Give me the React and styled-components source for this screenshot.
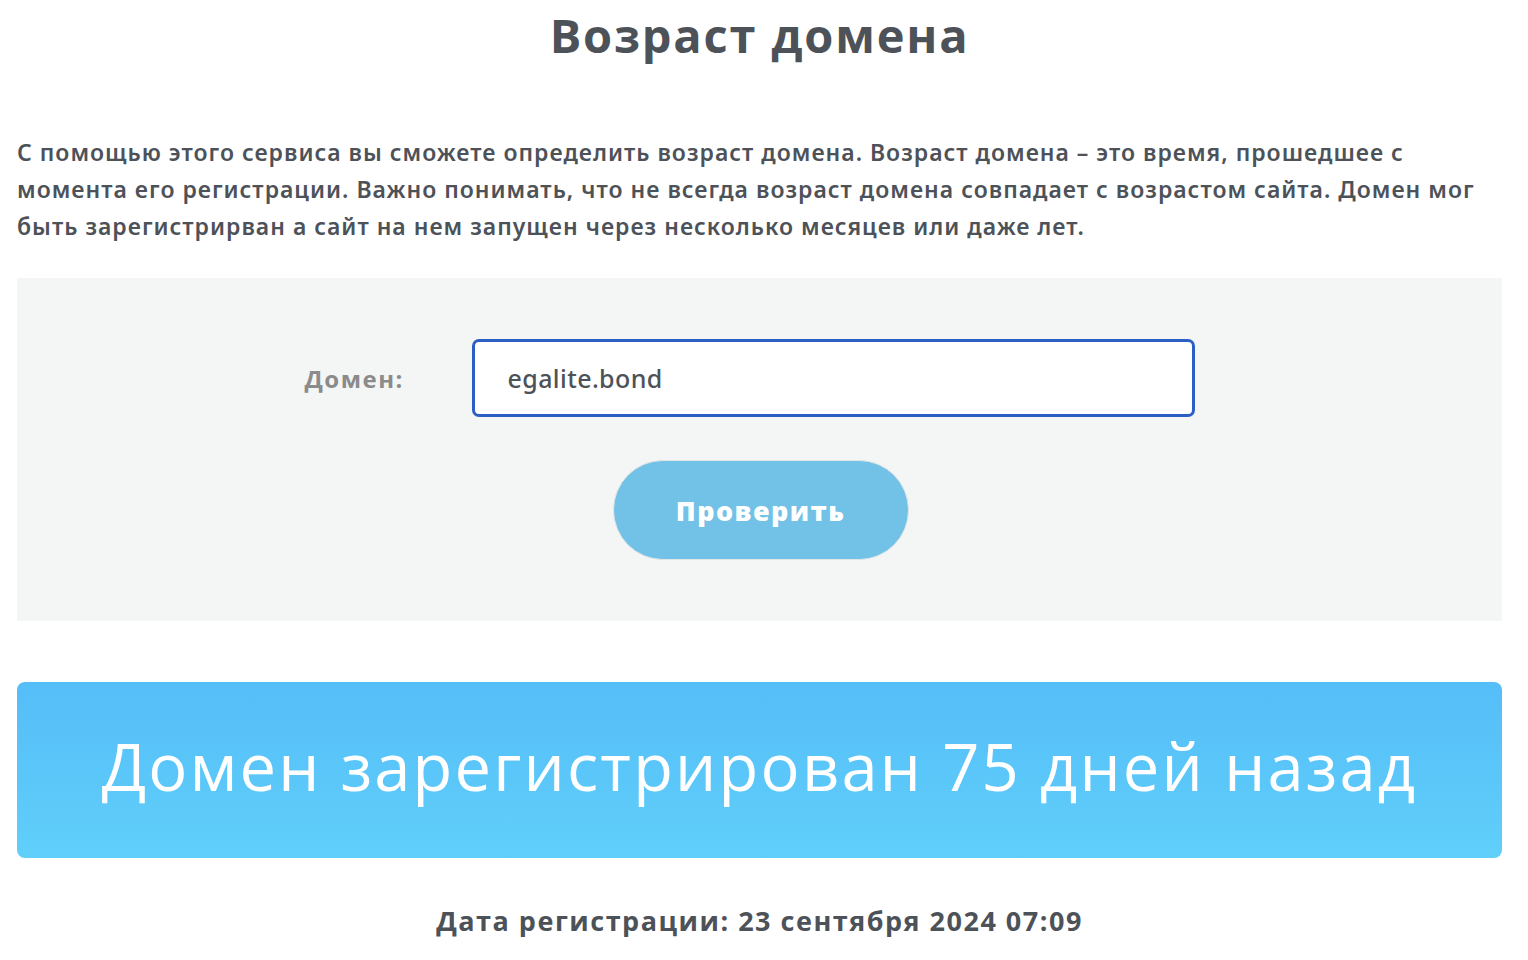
import React, { useState } from 'react'
import styled, { createGlobalStyle } from 'styled-components'

const Global = createGlobalStyle`
	html, body {
		margin: 0;
		padding: 0;
		background: #fff;
	}
	body {
		font-family: 'Open Sans', 'Noto Sans', sans-serif;
		color: #4d5259;
	}
`

const Page = styled.div`
	width: 1485px;
	padding: 0 26px 0 17px;
`

const Title = styled.h1`
	margin: 0;
	padding-top: 7px;
	height: 65px;
	text-align: center;
	font-family: 'Open Sans', sans-serif;
	font-weight: 700;
	font-size: 47px;
	letter-spacing: 1.8px;
	line-height: 56px;
	color: #4d5259;
`

const Intro = styled.p`
	margin: 62px 0 0;
	font-family: 'Noto Sans', sans-serif;
	font-weight: 600;
	font-size: 23px;
	letter-spacing: 1px;
	line-height: 37px;
	color: #4d5259;
`

const FormPanel = styled.form`
	margin-top: 33px;
	height: 343px;
	box-sizing: border-box;
	background: #f4f5f5;
	padding-top: 61px;
	display: flex;
	flex-direction: column;
	align-items: center;
`

const FieldRow = styled.div`
	display: flex;
	align-items: center;
	width: 890px;
	margin-right: 20px;
`

const Label = styled.label`
	width: 167px;
	font-family: 'Open Sans', sans-serif;
	font-weight: 700;
	font-size: 24px;
	letter-spacing: 1.5px;
	color: #8b8b8b;
`

const Input = styled.input`
	width: 723px;
	height: 78px;
	box-sizing: border-box;
	border: 3px solid #2c5fc3;
	border-radius: 7px;
	padding: 0 33px;
	background: #fff;
	font-family: 'Noto Sans', sans-serif;
	font-weight: 500;
	font-size: 25px;
	letter-spacing: 0.4px;
	color: #4d5259;
	outline: none;
`

const Button = styled.button`
	margin-top: 43px;
	margin-left: 2px;
	width: 296px;
	height: 100px;
	border: 1px solid #e3e6e8;
	border-radius: 50px;
	background: #72c1e6;
	color: #fff;
	font-family: 'Open Sans', sans-serif;
	font-weight: 800;
	font-size: 27px;
	letter-spacing: 1.4px;
	cursor: pointer;
`

const Result = styled.div`
	margin-top: 61px;
	height: 176px;
	border-radius: 8px;
	background: linear-gradient(to bottom, #55bdf8, #60cffa);
	display: flex;
	align-items: center;
	justify-content: center;
`

const ResultText = styled.span`
	font-family: 'Open Sans', sans-serif;
	font-weight: 400;
	font-size: 65px;
	letter-spacing: 2.2px;
	color: #fff;
	padding-bottom: 8px;
`

const DateLine = styled.p`
	margin: 44px 0 0;
	text-align: center;
	font-family: 'Open Sans', sans-serif;
	font-weight: 700;
	font-size: 27px;
	letter-spacing: 1.5px;
	color: #4d5259;
`

export default function App() {
	const [domain, setDomain] = useState('egalite.bond')
	return (
		<Page>
			<Global />
			<Title>Возраст домена</Title>
			<Intro>
				С помощью этого сервиса вы сможете определить возраст домена. Возраст домена – это время, прошедшее с
				момента его регистрации. Важно понимать, что не всегда возраст домена совпадает с возрастом сайта. Домен мог
				быть зарегистрирван а сайт на нем запущен через несколько месяцев или даже лет.
			</Intro>
			<FormPanel onSubmit={e => e.preventDefault()}>
				<FieldRow>
					<Label htmlFor="domain">Домен:</Label>
					<Input id="domain" value={domain} onChange={e => setDomain(e.target.value)} />
				</FieldRow>
				<Button type="submit">Проверить</Button>
			</FormPanel>
			<Result>
				<ResultText>Домен зарегистрирован 75 дней назад</ResultText>
			</Result>
			<DateLine>Дата регистрации: 23 сентября 2024 07:09</DateLine>
		</Page>
	)
}
